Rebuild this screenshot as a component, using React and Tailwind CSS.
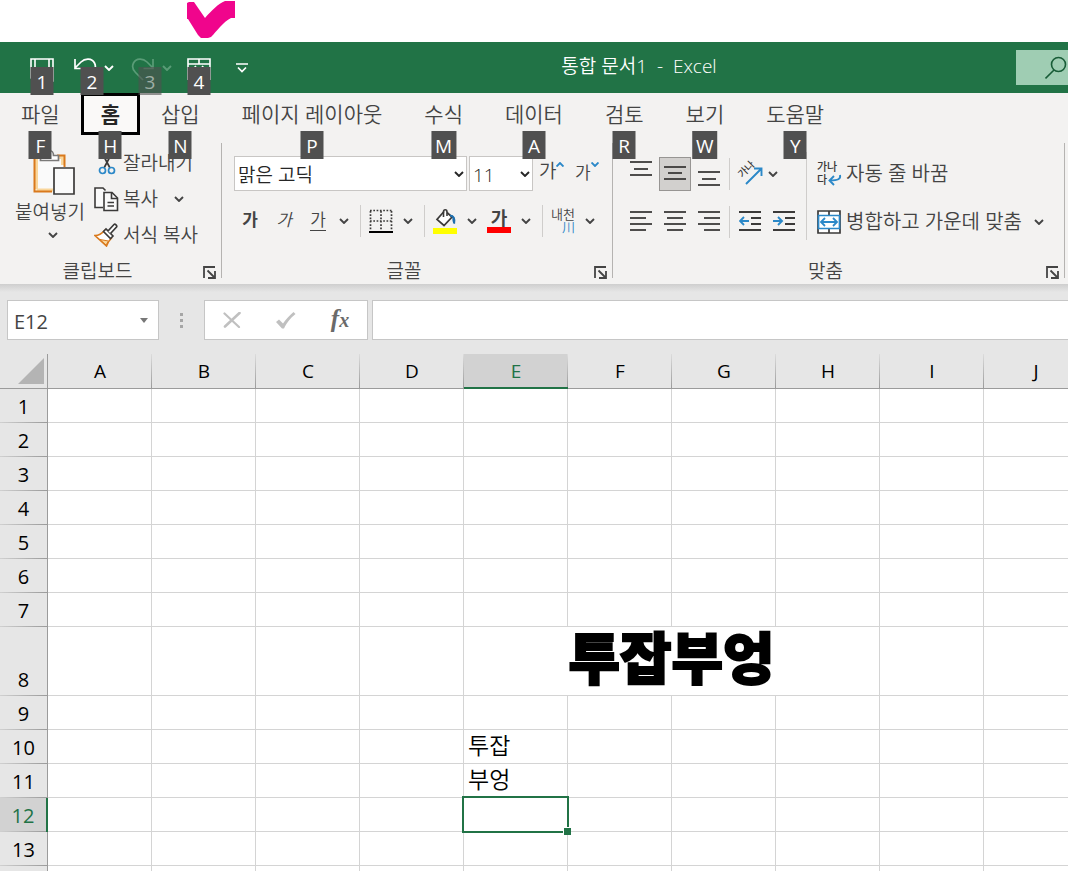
import React, { useState } from 'react';
import clsx from 'clsx';

const COLUMNS = 'ABCDEFGHIJKLMNOPQRST'.split('');
const ROWS = Array.from({ length: 24 }, (_, i) => i + 1);

const CELLS = {
  E8: { text: '투잡부엉', span: 4, title: true },
  E10: { text: '투잡' },
  E11: { text: '부엉' },
};

const TABS = [
  { label: '파일', tip: 'F' },
  { label: '홈', tip: 'H' },
  { label: '삽입', tip: 'N' },
  { label: '페이지 레이아웃', tip: 'P' },
  { label: '수식', tip: 'M' },
  { label: '데이터', tip: 'A' },
  { label: '검토', tip: 'R' },
  { label: '보기', tip: 'W' },
  { label: '도움말', tip: 'Y' },
];

/* ---------- Small shared pieces ---------- */

function KeyTip({ children, className }) {
  return (
    <span
      className={clsx(
        'absolute left-1/2 -translate-x-1/2 z-20 flex h-7 min-w-[23px] items-center justify-center px-1 pt-0.5 text-[19px] font-normal leading-none text-white',
        className
      )}
    >
      {children}
    </span>
  );
}

function Chevron({ className = 'text-[#444]' }) {
  return (
    <svg width="10" height="6" viewBox="0 0 10 6" fill="none" className={className}>
      <path d="M1 1l4 4 4-4" stroke="currentColor" strokeWidth="1.9" />
    </svg>
  );
}

function IconButton({ label, className = 'w-8', children }) {
  return (
    <button aria-label={label} className={clsx('flex h-[34px] items-center justify-center', className)}>
      {children}
    </button>
  );
}

function SplitButton({ label, children }) {
  return (
    <div className="flex">
      <IconButton label={label} className="w-9">{children}</IconButton>
      <IconButton label={`${label} 옵션`} className="w-[18px]"><Chevron /></IconButton>
    </div>
  );
}

function Separator() {
  return <span className="ml-[7px] mr-0.5 h-8 w-px bg-[#cfcdcb]" />;
}

function Group({ name, className, children }) {
  return (
    <section className={clsx('relative flex flex-col justify-between pt-2', className)}>
      <div className="flex-1">{children}</div>
      <div className="flex h-7 items-center">
        <span className="flex-1 pr-2 pt-0.5 text-center text-[19px]">{name}</span>
        <button aria-label={`${name} 설정`} className="mr-1.5 pt-1">
          <svg width="13" height="13" viewBox="0 0 13 13" fill="none" stroke="#444" strokeWidth="1.8">
            <path d="M1 12V1h11M4.500 4.500l6.500 6.500M12 5v7H5" />
          </svg>
        </button>
      </div>
      <span className="absolute right-0 top-2 bottom-[6px] w-px bg-[#b5b3b1]" />
    </section>
  );
}

/* ---------- Icons ---------- */

const LINE_SETS = {
  top: [[0, 22, 0], [4, 18, 7], [0, 22, 13]],
  middle: [[0, 22, 5], [4, 18, 11], [0, 22, 17]],
  bottom: [[0, 22, 10], [4, 18, 17], [0, 22, 23]],
  left: [[0, 22, 2], [0, 16, 8], [0, 22, 14], [0, 16, 20]],
  center: [[0, 22, 2], [3, 19, 8], [0, 22, 14], [3, 19, 20]],
  right: [[0, 22, 2], [6, 22, 8], [0, 22, 14], [6, 22, 20]],
};

function LinesIcon({ kind }) {
  return (
    <svg width="22" height="24" viewBox="0 0 22 24" stroke="#3b3a39" strokeWidth="1.8" className="overflow-visible">
      {LINE_SETS[kind].map(([x1, x2, y]) => (
        <path key={y} d={`M${x1} ${y}H${x2}`} />
      ))}
    </svg>
  );
}

function IndentIcon({ increase }) {
  return (
    <svg width="22" height="24" viewBox="0 0 22 24" fill="none" stroke="#3b3a39" strokeWidth="1.8">
      <path d="M0 2h22M12 8h10M12 14h10M0 20h22" />
      <path
        d={increase ? 'M0 11h9M5 7l4 4-4 4' : 'M10 11H1M5 7l-4 4 4 4'}
        stroke="#2b88c8"
        strokeWidth="1.9"
      />
    </svg>
  );
}

function PasteIcon() {
  return (
    <svg width="42" height="46" viewBox="0 0 42 46" fill="none">
      <path d="M1.500 6.500h30v36h-30z" fill="#fafafa" />
      <path d="M3.500 40V8.500h8M20 41H3.500M29.500 16V8.500H22" stroke="#f9d69b" strokeWidth="3" />
      <path d="M19 42.500H1.500v-36H9M24 6.500h7.500V18" stroke="#d9791c" strokeWidth="2" />
      <path d="M7.500 11.500v-5h5c0-3 2-5 4-5s4 2 4 5h5v5z" fill="#fff" stroke="#7b7a79" strokeWidth="1.700" />
      <path d="M21 19h20v26H21z" fill="#fafafa" stroke="#3b3a39" strokeWidth="1.700" />
    </svg>
  );
}

function CutIcon() {
  return (
    <svg width="18" height="26" viewBox="0 0 18 26" fill="none" strokeWidth="1.700">
      <path d="M3 1l9 17M15 1L6 18" stroke="#3b3a39" />
      <circle cx="4.500" cy="20.500" r="3" stroke="#2b88c8" />
      <circle cx="13.500" cy="20.500" r="3" stroke="#2b88c8" />
    </svg>
  );
}

function CopyIcon() {
  return (
    <svg width="25" height="25" viewBox="0 0 25 25" fill="#fafafa" stroke="#3b3a39" strokeWidth="1.600">
      <path d="M9 20.500H1V1h8l2.500 2.500" />
      <path d="M10 5.500h8l5.500 5.500v12.500H10z" />
      <path d="M17.500 6v5.500H23M13.500 15.500h6.500M13.500 19h6.500" fill="none" />
    </svg>
  );
}

function PainterIcon() {
  return (
    <svg width="25" height="24" viewBox="0 0 25 24" fill="none">
      <path d="M1 12.500c4 0 7-2 9.500-5l7 7.500c-2 2-4 5-5 8z" fill="#fff" stroke="#d9791c" strokeWidth="1.600" />
      <path d="M6 16.500l8.500 1.500-2.500 4z" fill="#f9d69b" stroke="#d9791c" />
      <path d="M9.500 8.500l2.500-2.500 7 7-2.500 2.500z" fill="#fff" stroke="#3b3a39" strokeWidth="1.600" />
      <path d="M14 8l6-6.500c1-1 3.500 1 2.500 2.500l-6 6.500" fill="#fff" stroke="#3b3a39" strokeWidth="1.700" />
    </svg>
  );
}

function BorderIcon() {
  return (
    <svg width="24" height="24" viewBox="0 0 24 24" fill="none" stroke="#3b3a39">
      <path d="M1 1.500h22M1.500 2v19M22.500 2v19M12 2v19M1 12h22" strokeWidth="1.700" strokeDasharray="1.700 1.600" />
      <path d="M0 23h24" strokeWidth="2" stroke="#000" />
    </svg>
  );
}

function FillIcon() {
  return (
    <svg width="24" height="26" viewBox="0 0 24 26" fill="none">
      <path d="M17 7c4 0 5.500 3 4.500 9-1.500-1-2.500-3-2-6z" fill="#1f6fae" />
      <path d="M11 3.500L4 11.500l7 6 8-8.500-5-4.500" fill="#fff" stroke="#3b3a39" strokeWidth="1.700" />
      <path d="M10.500 9V4c0-3 3.500-3 3.500 0v4" stroke="#3b3a39" strokeWidth="1.600" />
      <path d="M17 7.500c3.500 0 5 3 4 8" stroke="#1f6fae" strokeWidth="2.200" />
      <path d="M0 20h24v6H0z" fill="#ff0" />
    </svg>
  );
}

function MergeIcon() {
  return (
    <svg width="24" height="24" viewBox="0 0 24 24" fill="none">
      <path d="M1 1h22v22H1zM12 1v5M12 18v5" fill="#fff" stroke="#3b3a39" strokeWidth="1.700" />
      <path d="M1.500 5.500h21v13h-21z" fill="#fff" stroke="#2b88c8" strokeWidth="1.700" />
      <path d="M4 12h16M8 8l-4 4 4 4M16 8l4 4-4 4" stroke="#2b88c8" strokeWidth="1.800" />
    </svg>
  );
}

/* ---------- Title bar ---------- */

function TitleBar() {
  return (
    <header className="flex h-[51px] shrink-0 items-center bg-[#217346] text-white">
      <div className="flex h-full items-center gap-2.5 pl-[26px]">
        <button aria-label="저장" className="relative flex h-full w-8 items-center justify-center pt-1">
          <svg width="24" height="24" viewBox="0 0 24 24" fill="none" stroke="#fff" strokeWidth="1.600">
            <path d="M1 1h22v22H4l-3-3zM5 1v10h14V1" />
          </svg>
          <KeyTip className="top-[25px] bg-[#505050]">1</KeyTip>
        </button>
        <div className="relative flex h-full">
          <button aria-label="실행 취소" className="flex w-[34px] items-center justify-center pt-1">
            <svg width="24" height="24" viewBox="0 0 24 24" fill="none" stroke="#fff" strokeWidth="1.700">
              <path d="M2 1v9.500h9.500M2 10l6-6c4-4 11-4 13.500 1 2 4 .5 7-2 9.500L12 22" />
            </svg>
          </button>
          <button aria-label="실행 취소 목록" className="w-3.5 pl-0.5"><Chevron className="text-white" /></button>
          <KeyTip className="top-[25px] bg-[#505050]">2</KeyTip>
        </div>
        <div className="relative flex h-full">
          <button aria-label="다시 실행" className="flex w-[34px] items-center justify-center pt-1">
            <svg width="24" height="24" viewBox="0 0 24 24" fill="none" stroke="#5a9c77" strokeWidth="1.700">
              <path d="M22 1v9.500h-9.500M22 10l-6-6C12 0 5 0 2.500 5c-2 4-.5 7 2 9.500L12 22" />
            </svg>
          </button>
          <button aria-label="다시 실행 목록" className="w-3.5 pl-0.5"><Chevron className="text-[#5a9c77]" /></button>
          <KeyTip className="top-[25px] bg-[#505050]/60 text-white/50">3</KeyTip>
        </div>
        <button aria-label="양식" className="relative flex h-full w-[30px] items-center justify-center pt-1">
          <svg width="24" height="24" viewBox="0 0 24 24" fill="none" stroke="#fff" strokeWidth="1.600">
            <path d="M1 22V1h22v21M1 6h22M12 1v5M1 10.500h4M19 10.500h4M5 12l4-4M15 8l4 4" />
          </svg>
          <KeyTip className="top-[25px] bg-[#505050]">4</KeyTip>
        </button>
        <button aria-label="빠른 실행 도구 모음 사용자 지정" className="ml-2.5 flex w-4 justify-center">
          <svg width="12" height="10" viewBox="0 0 12 10" fill="none" stroke="#fff" strokeWidth="1.700">
            <path d="M0 1h12M2 4.500l4 4 4-4" />
          </svg>
        </button>
      </div>
      <h1 className="flex-1 whitespace-pre pb-0.5 pl-3 text-center text-[19px] font-[350]">통합 문서1  -  Excel</h1>
      <button aria-label="검색" className="flex h-[35px] w-[52px] items-center justify-end bg-[#9fcdb3] pr-px">
        <svg width="22" height="24" viewBox="0 0 22 24" fill="none" stroke="#185c37" strokeWidth="1.600">
          <circle cx="13.500" cy="8.500" r="7" />
          <path d="M9 14l-8.500 8.500" />
        </svg>
      </button>
    </header>
  );
}

/* ---------- Ribbon ---------- */

function RibbonTabs({ active, onSelect }) {
  return (
    <nav className="flex h-[42px]">
      {TABS.map(({ label, tip }) => (
        <button
          key={label}
          onClick={() => onSelect(label)}
          className={clsx(
            'relative h-full whitespace-nowrap text-[21px] leading-none',
            active === label
              ? 'border-[3px] border-black bg-[#faf9f8] px-[17px] font-bold text-[#262626]'
              : 'px-[21px]'
          )}
        >
          {label}
          <KeyTip className={clsx('bg-[#505050]', active === label ? 'top-[35px]' : 'top-[38px]')}>{tip}</KeyTip>
        </button>
      ))}
    </nav>
  );
}

function Select({ label, options, className }) {
  return (
    <div className={clsx('relative', className)}>
      <select
        aria-label={label}
        className="h-[35px] w-full appearance-none border border-[#c8c6c4] bg-white px-[3px] pt-1 text-[19px] text-[#262626]"
      >
        {options.map((o) => <option key={o}>{o}</option>)}
      </select>
      <Chevron className="pointer-events-none absolute right-[3px] top-[15px] text-[#262626]" />
    </div>
  );
}

function ClipboardGroup() {
  return (
    <Group name="클립보드" className="w-[222px]">
      <div className="flex gap-1.5 pl-3">
        <button className="flex w-[76px] flex-col items-center pt-1.5 text-[19px] leading-none">
          <span className="pl-2"><PasteIcon /></span>
          <span className="whitespace-nowrap pt-2">붙여넣기</span>
          <span className="pl-1.5 pt-2.5"><Chevron /></span>
        </button>
        <div className="pt-0.5 text-[19px]">
          <button className="flex h-9 items-center gap-1">
            <span className="flex w-[25px] justify-center"><CutIcon /></span>잘라내기
          </button>
          <div className="flex h-9 items-center">
            <button className="flex items-center gap-1"><CopyIcon />복사</button>
            <button aria-label="복사 옵션" className="ml-4"><Chevron /></button>
          </div>
          <button className="flex h-9 items-center gap-1"><PainterIcon />서식 복사</button>
        </div>
      </div>
    </Group>
  );
}

function FontGroup() {
  return (
    <Group name="글꼴" className="w-[391px]">
      <div className="flex flex-col gap-3 pt-[13px]">
        <div className="flex h-[35px] pl-3">
          <Select label="글꼴" options={['맑은 고딕', '굴림', '돋움']} className="w-[233px]" />
          <Select label="글꼴 크기" options={['11', '12', '14']} className="ml-0.5 w-16" />
          <button aria-label="글꼴 크기 크게" className="ml-1.5 flex w-8 items-start pt-1 text-[19px] leading-none">
            <span className="pt-0.5">가</span>
            <svg width="8" height="5" viewBox="0 0 8 5" fill="none" className="mt-0.5">
              <path d="M.500 4.500L4 1l3.500 3.500" stroke="#2b88c8" strokeWidth="1.900" />
            </svg>
          </button>
          <button aria-label="글꼴 크기 작게" className="ml-1 flex w-8 items-start pt-1 text-[17px] leading-none">
            <span className="pt-1">가</span>
            <svg width="8" height="5" viewBox="0 0 8 5" fill="none" className="mt-0.5">
              <path d="M.500.500L4 4 7.500.500" stroke="#2b88c8" strokeWidth="1.900" />
            </svg>
          </button>
        </div>
        <div className="flex h-9 items-center pl-[11px] text-[17px] leading-none">
          <IconButton label="굵게" className="w-[34px] pb-1 font-bold">가</IconButton>
          <IconButton label="기울임꼴" className="w-[34px] pb-1 italic">가</IconButton>
          <IconButton label="밑줄" className="w-[34px]">
            <span className="border-b border-[#444] pb-0.5">가</span>
          </IconButton>
          <IconButton label="밑줄 옵션" className="w-[18px]"><Chevron /></IconButton>
          <Separator />
          <SplitButton label="테두리"><BorderIcon /></SplitButton>
          <Separator />
          <SplitButton label="채우기 색"><FillIcon /></SplitButton>
          <SplitButton label="글꼴 색">
            <span className="w-6 border-b-[6px] border-[#f00] text-center text-[18px] font-bold">가</span>
          </SplitButton>
          <Separator />
          <SplitButton label="윗주">
            <span className="flex flex-col text-[13px] leading-[13px]">
              내천
              <span className="text-right text-[#2b88c8]">川</span>
            </span>
          </SplitButton>
        </div>
      </div>
    </Group>
  );
}

function AlignGroup() {
  return (
    <Group name="맞춤" className="w-[452px]">
      <div className="flex pt-[9px] pl-3">
        <div className="flex flex-col gap-3 pt-1">
          <div className="flex h-9 items-center gap-0.5">
            <IconButton label="위쪽 맞춤"><LinesIcon kind="top" /></IconButton>
            <IconButton label="가운데 맞춤" className="w-8 border border-[#979593] bg-[#d2d0ce]">
              <LinesIcon kind="middle" />
            </IconButton>
            <IconButton label="아래쪽 맞춤"><LinesIcon kind="bottom" /></IconButton>
            <span className="mx-0.5 h-8 w-px bg-[#cfcdcb]" />
            <IconButton label="방향">
              <svg width="26" height="26" viewBox="0 0 26 26" fill="none" className="shrink-0 overflow-visible">
                <text x="9" y="12" textAnchor="middle" transform="rotate(-45 9 8)" fontSize="10" fill="#3b3a39" className="font-medium">가나</text>
                <path d="M9 23L24 8M17 7.500h7.500V15" stroke="#2b88c8" strokeWidth="1.900" />
              </svg>
            </IconButton>
            <button aria-label="방향 옵션"><Chevron /></button>
          </div>
          <div className="flex h-9 items-center gap-0.5">
            <IconButton label="왼쪽 맞춤"><LinesIcon kind="left" /></IconButton>
            <IconButton label="가로 가운데 맞춤"><LinesIcon kind="center" /></IconButton>
            <IconButton label="오른쪽 맞춤"><LinesIcon kind="right" /></IconButton>
            <span className="mx-0.5 h-8 w-px bg-[#cfcdcb]" />
            <IconButton label="내어쓰기"><IndentIcon /></IconButton>
            <IconButton label="들여쓰기"><IndentIcon increase /></IconButton>
          </div>
        </div>
        <span className="ml-1.5 w-px bg-[#cfcdcb]" />
        <div className="flex flex-col gap-3 pl-2.5 pt-1 text-[20px]">
          <button className="flex h-9 items-center gap-1">
            <svg width="25" height="26" viewBox="0 0 25 26" fill="none" className="overflow-visible">
              <text x="0" y="10" fontSize="11" fill="#3b3a39" className="font-medium">가나</text>
              <text x="0" y="23" fontSize="11" fill="#3b3a39" className="font-medium">다</text>
              <path d="M23 14c1 4-2 5.500-10 5.500M17 15l-4.500 4.500L17 24" stroke="#2b88c8" strokeWidth="1.900" />
            </svg>
            자동 줄 바꿈
          </button>
          <div className="flex h-9 items-center">
            <button className="flex items-center gap-[5px] whitespace-nowrap"><MergeIcon />병합하고 가운데 맞춤</button>
            <button aria-label="병합 옵션" className="ml-3"><Chevron /></button>
          </div>
        </div>
      </div>
    </Group>
  );
}

/* ---------- Formula bar ---------- */

function FormulaBar() {
  return (
    <div className="relative flex h-[70px] shrink-0 items-start bg-[#e6e6e6] pl-[7px] pt-4">
      <div className="absolute inset-x-0 top-0 h-2 bg-gradient-to-b from-[#cecece] to-[#e6e6e6]" />
      <div className="flex h-10 w-[152px] items-center border border-[#c6c6c6] bg-white">
        <input
          aria-label="이름 상자"
          defaultValue="E12"
          className="min-w-0 flex-1 bg-transparent pl-1.5 pt-1 text-[20px] outline-none"
        />
        <button aria-label="이름 목록" className="px-2.5">
          <svg width="8" height="5" viewBox="0 0 8 5"><path d="M0 0h8L4 5z" fill="#777" /></svg>
        </button>
      </div>
      <div className="flex h-10 w-[45px] flex-col items-center justify-center gap-[3px]">
        <span className="size-[3px] bg-[#a6a6a6]" />
        <span className="size-[3px] bg-[#a6a6a6]" />
        <span className="size-[3px] bg-[#a6a6a6]" />
      </div>
      <div className="flex h-10 border border-[#c6c6c6] bg-white">
        <button aria-label="취소" className="flex w-[54px] items-center justify-center">
          <svg width="18" height="16" viewBox="0 0 18 16" stroke="#c0c0c0" strokeLinecap="round">
            <path d="M1.500 1.500L16 15" strokeWidth="2.200" />
            <path d="M16.500 1L2 14.500" strokeWidth="2.600" />
          </svg>
        </button>
        <button aria-label="입력" className="flex w-[54px] items-center justify-center">
          <svg width="20" height="17" viewBox="0 0 20 17" fill="#c0c0c0">
            <path d="M0 10L3 7.500l4 4C10 7 14 3 17.500 0L19.500 2C14 6.500 11 10.500 8 16.500H6z" />
          </svg>
        </button>
        <button
          aria-label="함수 삽입"
          className="w-[54px] pb-1 font-['Liberation_Serif',serif] text-[25px] font-bold italic leading-none text-[#6a6a6a]"
        >
          f<span className="text-[20px]">x</span>
        </button>
      </div>
      <input aria-label="수식 입력줄" className="ml-1 h-10 min-w-0 flex-1 border border-r-0 border-[#c6c6c6] bg-white px-2 outline-none" />
    </div>
  );
}

/* ---------- Sheet ---------- */

function Sheet() {
  const selected = { col: 'E', row: 12 };

  const renderRow = (row) => {
    const cells = [];
    for (let i = 0; i < COLUMNS.length; i++) {
      const col = COLUMNS[i];
      const cell = CELLS[col + row];
      const isSelected = col === selected.col && row === selected.row;
      cells.push(
        <td
          key={col}
          colSpan={cell?.span || 1}
          className={clsx(
            'relative border-b border-r border-[#d4d4d4] p-0 leading-none',
            cell?.title ? 'pb-2 text-center align-middle text-[56px] font-black' : 'pb-0.5 pl-1 text-[23px] font-[350]'
          )}
        >
          {cell?.title ? <span className="[-webkit-text-stroke:2px_black]">{cell.text}</span> : cell?.text}
          {isSelected && (
            <div className="absolute -inset-0.5 z-10 border-2 border-[#217346]">
              <span className="absolute -bottom-1 -right-1 size-2 border-l border-t border-white bg-[#217346]" />
            </div>
          )}
        </td>
      );
      if (cell?.span) i += cell.span - 1;
    }
    return cells;
  };

  return (
    <main className="flex-1 overflow-hidden bg-white">
      <table className="w-[2128px] table-fixed border-separate border-spacing-0 text-black">
        <colgroup>
          <col className="w-12" />
          {COLUMNS.map((c) => <col key={c} className="w-[104px]" />)}
        </colgroup>
        <thead>
          <tr className="h-[35px]">
            <th className="relative border-b border-r border-[#9b9b9b] bg-[#e6e6e6] p-0">
              <svg width="26" height="26" viewBox="0 0 26 26" className="ml-auto mr-[3px]">
                <path d="M26 0v26H0z" fill="#b4b4b4" />
              </svg>
            </th>
            {COLUMNS.map((c) => (
              <th
                key={c}
                className={clsx(
                  'relative p-0 text-[19px] font-normal leading-none',
                  c === selected.col
                    ? 'border-b-2 border-[#217346] bg-[#d2d2d2] pt-px text-[#217346]'
                    : 'border-b border-[#9b9b9b] bg-[#e6e6e6]'
                )}
              >
                {c}
                <span className="absolute right-0 top-0 h-full w-px bg-gradient-to-b from-[#dcdcdc] to-[#9b9b9b]" />
              </th>
            ))}
          </tr>
        </thead>
        <tbody>
          {ROWS.map((row) => (
            <tr key={row} className={row === 8 ? 'h-[69px]' : 'h-[34px]'}>
              <th
                className={clsx(
                  'relative px-0 pb-1 pt-0 align-bottom text-[20px] font-normal leading-6',
                  row === selected.row
                    ? 'border-r-2 border-[#217346] bg-[#d2d2d2] text-[#217346]'
                    : 'border-r border-[#9b9b9b] bg-[#e6e6e6]'
                )}
              >
                {row}
                <span className="absolute inset-x-0 bottom-0 h-px bg-gradient-to-r from-[#d0d0d0] to-[#9b9b9b]" />
              </th>
              {renderRow(row)}
            </tr>
          ))}
        </tbody>
      </table>
    </main>
  );
}

export default function App() {
  const [tab, setTab] = useState('홈');

  return (
    <div className="flex h-screen flex-col overflow-hidden bg-white font-['Open_Sans','Noto_Sans_CJK_KR',sans-serif] text-[#444]">
      {/* Pointer mark above the quick access toolbar */}
      <div className="h-[42px] shrink-0 pl-[187px]">
        <svg width="49" height="40" viewBox="0 0 49 40">
          <path d="M0 3l2-1h5l11 16C25 10 31 4 38 1h10v17h-4C36 22 30 31 24 37l-3 1h-7l-3-3L1 19H0z" fill="#f0058c" />
        </svg>
      </div>
      <TitleBar />
      <div className="shrink-0 bg-[#f3f2f1] font-[350]">
        <RibbonTabs active={tab} onSelect={setTab} />
        <div className="flex h-[149px] *:shrink-0">
          <ClipboardGroup />
          <FontGroup />
          <AlignGroup />
        </div>
      </div>
      <FormulaBar />
      <Sheet />
    </div>
  );
}
